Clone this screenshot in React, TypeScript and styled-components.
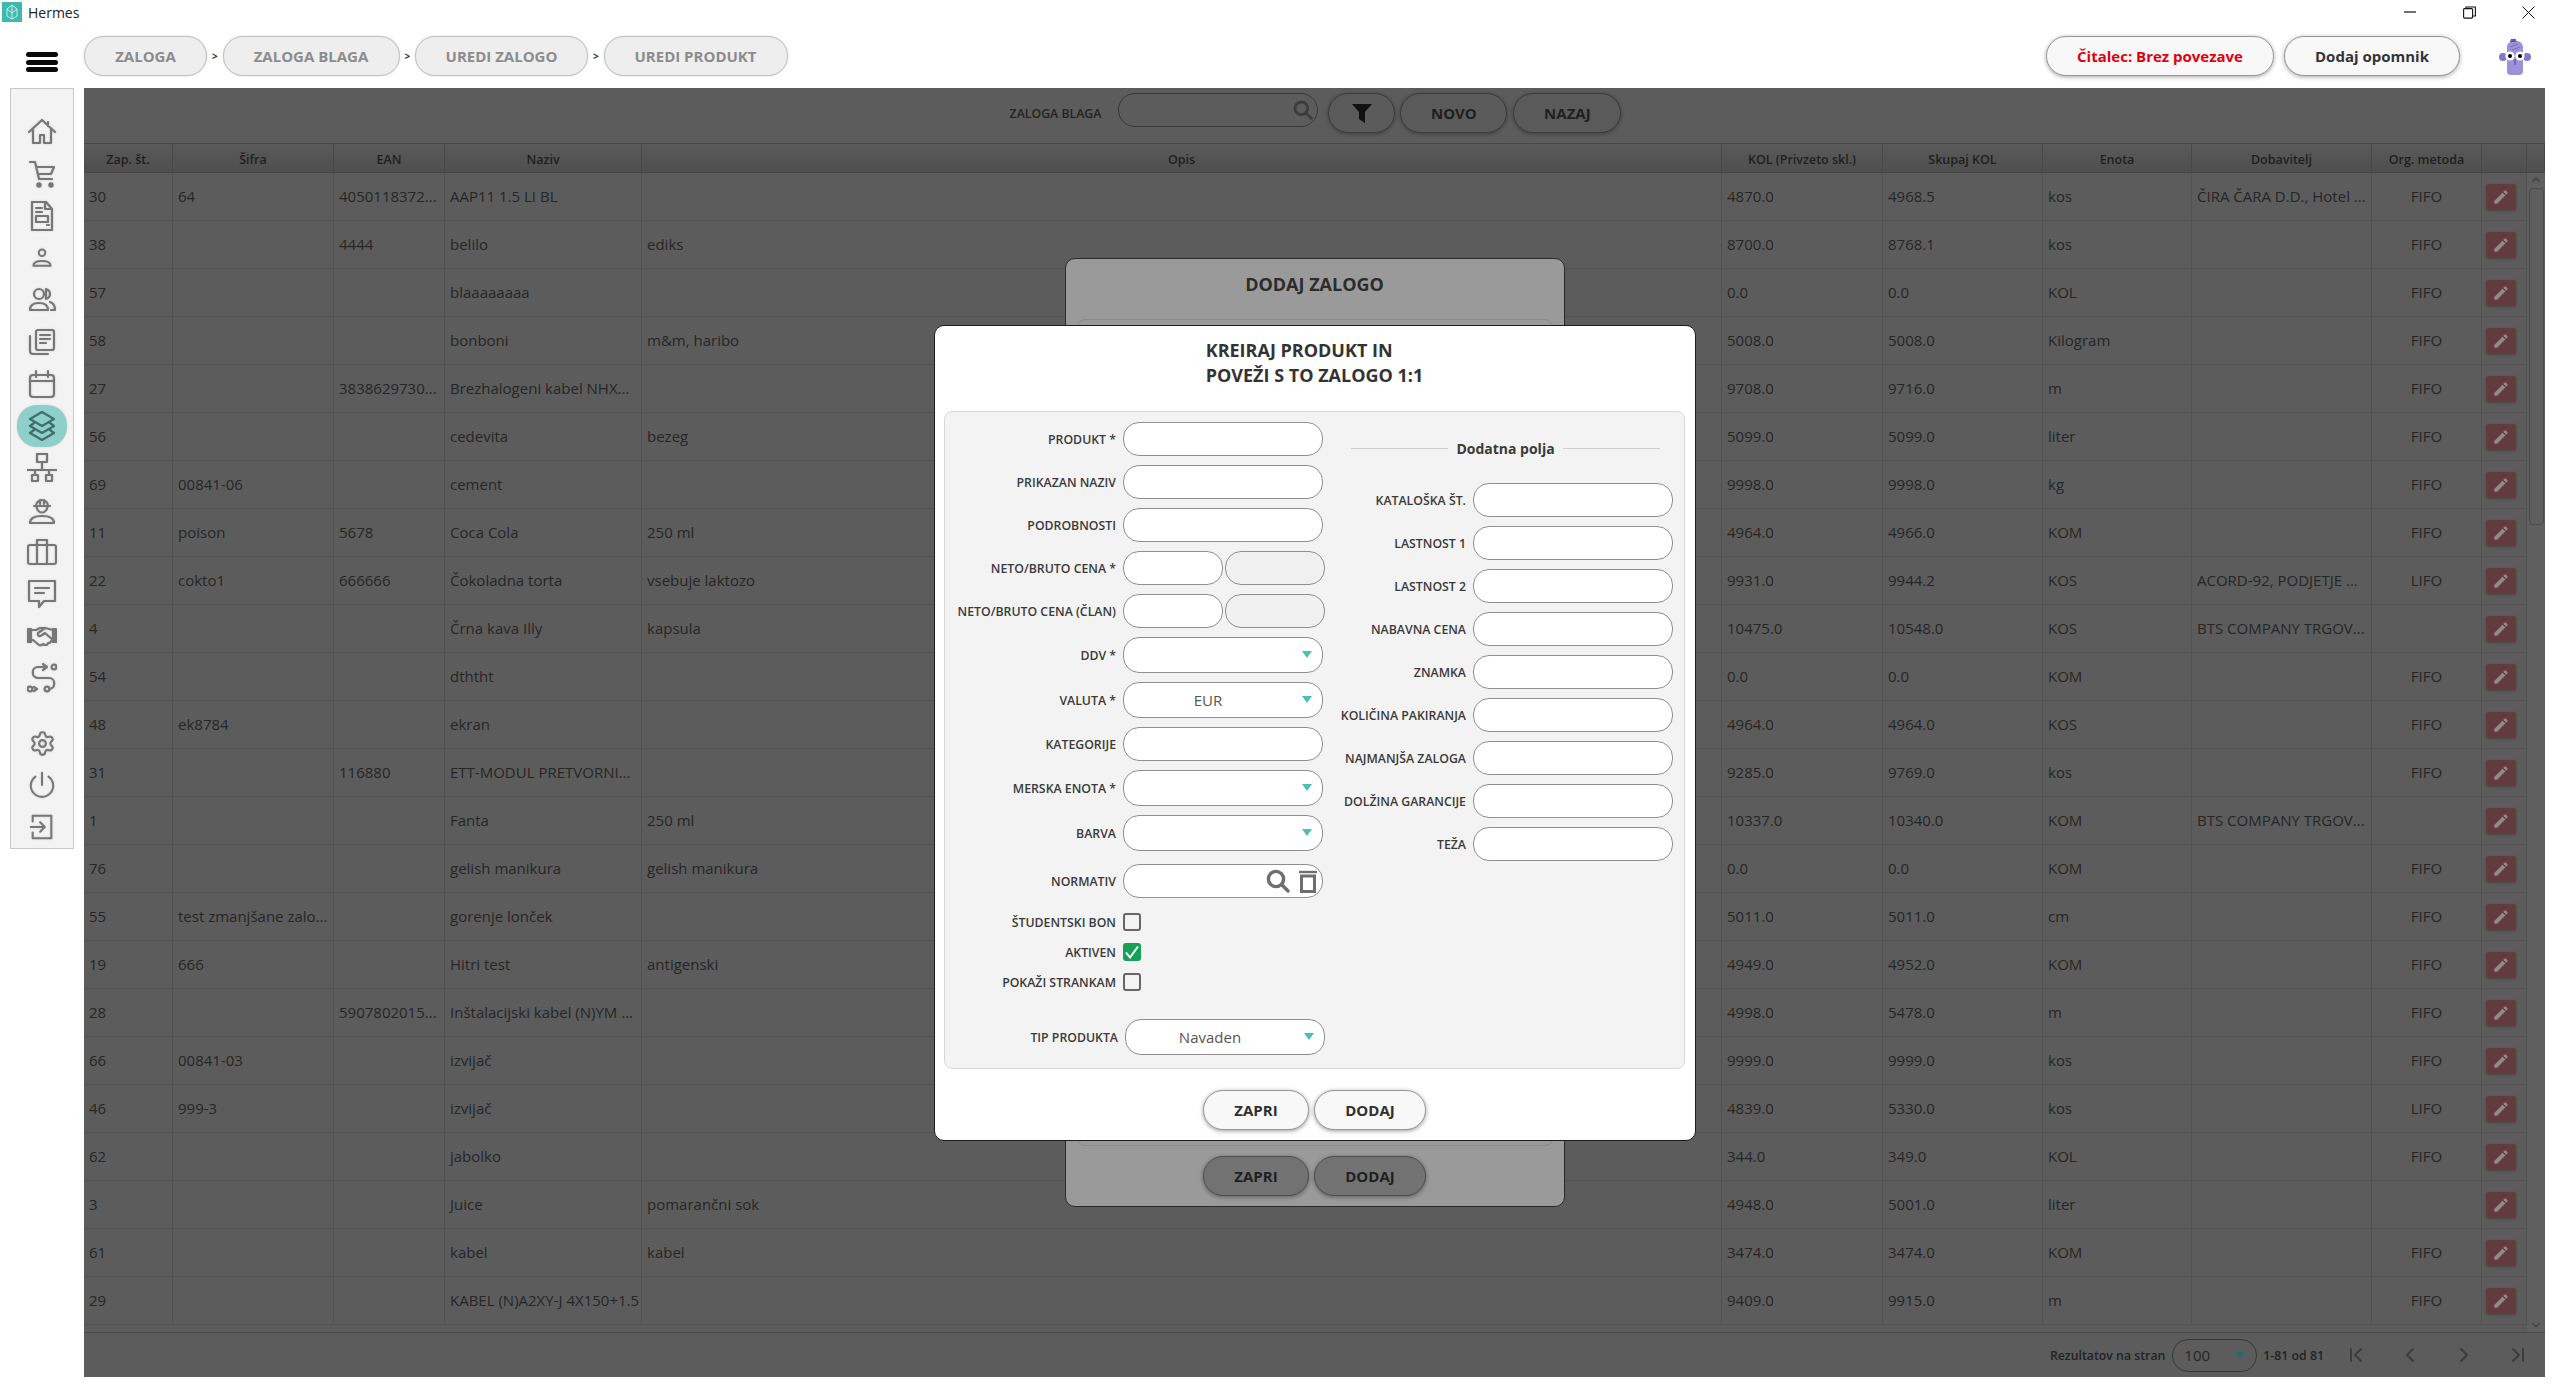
import React from "react"
import styled, { createGlobalStyle } from "styled-components"
import { ChevronFirst, ChevronLast, ChevronLeft, ChevronRight, ChevronDown, ChevronUp, Settings } from "lucide-react"

const Global = createGlobalStyle`
  html, body { margin: 0; padding: 0; background: #fff; }
  body { font-family: "Open Sans", "Liberation Sans", sans-serif; overflow: hidden; }
  * { box-sizing: border-box; }
`

const Page = styled.div`
  width: 2560px;
  height: 1396px;
  display: flex;
  flex-direction: column;
  background: #fff;
`

const TitleBar = styled.div`
  height: 30px;
  display: flex;
  align-items: flex-start;
  padding-left: 2px;
  padding-top: 2px;
  font-size: 14px;
  line-height: 22px;
  color: #222;
`
const TitleText = styled.span`
  margin-left: 6px;
`
const WindowButtons = styled.div`
  margin-left: auto;
  display: flex;
  margin-right: 25px;
  gap: 46px;
  padding-top: 4px;
`
const Header = styled.div`
  height: 58px;
  padding: 6px 28px 0 26px;
  display: flex;
  align-items: flex-start;
`
const Hamburger = styled.div`
  width: 32px;
  height: 20px;
  margin-top: 16px;
  margin-right: 26px;
  display: flex;
  flex-direction: column;
  justify-content: space-between;
  span { display: block; height: 5px; border-radius: 3px; background: #0a0a0a; }
`
const Crumbs = styled.div`
  display: flex;
  align-items: center;
  height: 40px;
`
const Crumb = styled.div<{ $w: number }>`
  width: ${(p) => p.$w}px;
  height: 40px;
  border-radius: 20px;
  border: 1.5px solid #c2c2c2;
  background: #eeeeee;
  box-shadow: 0 0 2px rgba(0, 0, 0, 0.2);
  display: flex;
  align-items: center;
  justify-content: center;
  font-size: 15px;
  font-weight: 700;
  color: #8c8c8c;
`
const CrumbArrow = styled.span`
  width: 15.5px;
  text-align: center;
  font-size: 10px;
  font-weight: 700;
  color: #333;
`
const HeaderRight = styled.div`
  margin-left: auto;
  display: flex;
  align-items: flex-start;
  gap: 10px;
`
const TopButton = styled.div<{ $w: number; $red?: boolean }>`
  width: ${(p) => p.$w}px;
  height: 40px;
  border-radius: 20px;
  border: 1.5px solid #999;
  background: #f8f8f8;
  box-shadow: 0 1px 4px rgba(0, 0, 0, 0.35);
  display: flex;
  align-items: center;
  justify-content: center;
  font-size: 15px;
  font-weight: 700;
  color: ${(p) => (p.$red ? "#e2000f" : "#33343a")};
`
const Avatar = styled.div`
  margin-left: 28px;
  margin-top: 1px;
  width: 34px;
  height: 40px;
`
const Body = styled.div`
  flex: 1;
  display: flex;
  padding: 0 15px 19px 10px;
`
const Sidebar = styled.div`
  width: 64px;
  height: 761px;
  margin-right: 10px;
  padding-top: 22px;
  background: #f3f3f3;
  border: 1px solid #c9c9c9;
  display: flex;
  flex-direction: column;
  align-items: center;
`
const NavItem = styled.div<{ $active?: boolean; $gapTop?: boolean }>`
  width: 50px;
  height: 42px;
  flex: none;
  display: flex;
  align-items: center;
  justify-content: center;
  margin-top: ${(p) => (p.$gapTop ? "23px" : "0")};
  border-radius: 20px;
  background: ${(p) => (p.$active ? "#8fcfca" : "transparent")};
  color: ${(p) => (p.$active ? "#3f6f6c" : "#777")};
  filter: drop-shadow(0 0 1px rgba(0, 0, 0, 0.12));
`
const Glyph = styled.svg.attrs({ viewBox: "0 0 30 30", fill: "none" })<{ $s?: number }>`
  width: ${(p) => p.$s || 30}px;
  height: ${(p) => p.$s || 30}px;
  stroke: currentColor;
  stroke-width: 2.2;
  stroke-linejoin: round;
  stroke-linecap: round;
`
const Main = styled.div`
  flex: 1;
  position: relative;
  display: flex;
  flex-direction: column;
  background: #5c5c5c;
  overflow: hidden;
`
const Toolbar = styled.div`
  height: 55px;
  padding: 5px 0 0 2px;
  display: flex;
  justify-content: center;
  align-items: flex-start;
  color: #232323;
`
const ToolbarLabel = styled.div`
  height: 42px;
  line-height: 42px;
  margin-right: 17px;
  font-size: 12.3px;
  font-weight: 600;
`
const SearchBox = styled.div`
  width: 200px;
  height: 34px;
  border: 1.5px solid #383838;
  border-radius: 17px;
  display: flex;
  align-items: center;
  justify-content: flex-end;
  padding-right: 4px;
  color: #3c3c3c;
  margin-right: 10px;
`
const DimButton = styled.div<{ $w: number; $mr?: number }>`
  width: ${(p) => p.$w}px;
  height: 40px;
  margin-right: ${(p) => p.$mr || 0}px;
  border-radius: 20px;
  border: 1.5px solid #3a3a3a;
  background: #5a5a5a;
  box-shadow: 0 1px 4px rgba(0, 0, 0, 0.3);
  display: flex;
  align-items: center;
  justify-content: center;
  font-size: 15px;
  font-weight: 700;
  color: #1f1f1f;
`
const cols = "89px 161px 111px 197px 1080px 161px 160px 149px 180px 110px 45px"
const HeadRow = styled.div`
  height: 30px;
  flex: none;
  display: grid;
  grid-template-columns: ${cols} 18px;
  border-top: 1px solid #474747;
  border-bottom: 1px solid #474747;
  background: linear-gradient(#5a5a5a, #4e4e4e);
`
const HeadCell = styled.div`
  display: flex;
  align-items: center;
  justify-content: center;
  padding-top: 2px;
  border-right: 1px solid #484848;
  font-size: 12.5px;
  font-weight: 600;
  color: #1f1f1f;
  white-space: nowrap;
`
const TableArea = styled.div`
  flex: 1;
  display: flex;
  min-height: 0;
  border-bottom: 1px solid #484848;
`
const Rows = styled.div`
  width: 2443px;
  overflow: hidden;
`
const Row = styled.div`
  height: 48px;
  display: grid;
  grid-template-columns: ${cols};
  border-bottom: 1px solid #525252;
`
const Cell = styled.div<{ $center?: boolean }>`
  display: flex;
  align-items: center;
  justify-content: ${(p) => (p.$center ? "center" : "flex-start")};
  padding-left: ${(p) => (p.$center ? "0" : "5px")};
  padding-bottom: 2px;
  border-right: 1px solid #525252;
  font-size: 15px;
  color: #262626;
  white-space: nowrap;
  overflow: hidden;
`
const EditButton = styled.div`
  width: 30px;
  height: 26px;
  margin: 2px 0 0 -1px;
  border-radius: 3px;
  background: #623c3c;
  box-shadow: 0 1px 3px rgba(0, 0, 0, 0.25);
  display: flex;
  align-items: center;
  justify-content: center;
`
const Scrollbar = styled.div`
  width: 18px;
  display: flex;
  flex-direction: column;
  align-items: center;
  color: #3f3f3f;
  background: #5f5f5f;
`
const ScrollThumb = styled.div`
  width: 15px;
  height: 337px;
  margin: 1px 0 auto;
  border: 1px solid #4a4a4a;
  border-radius: 4px;
  background: #5e5e5e;
`
const Footer = styled.div`
  height: 44px;
  flex: none;
  display: flex;
  align-items: center;
  justify-content: flex-end;
  font-size: 12.3px;
  font-weight: 600;
  color: #232323;
`
const PageSize = styled.div`
  width: 85px;
  height: 33px;
  margin: 0 6px 0 7px;
  padding: 0 11px;
  border: 1.5px solid #383838;
  border-radius: 16px;
  display: flex;
  align-items: center;
  justify-content: space-between;
  font-size: 15px;
  font-weight: 400;
  color: #262626;
`
const DarkCaret = styled.i`
  width: 0;
  height: 0;
  border-left: 5px solid transparent;
  border-right: 5px solid transparent;
  border-top: 7px solid #2a6864;
`
const Pager = styled.div`
  display: flex;
  margin-left: 20px;
  margin-right: 15px;
  gap: 30px;
  color: #3c3c3c;
`
const Overlay = styled.div`
  position: absolute;
  inset: 0;
  display: flex;
  align-items: center;
  justify-content: center;
`
const BackModal = styled.div`
  width: 500px;
  height: 949px;
  border: 1px solid #2a2a2a;
  border-radius: 10px;
  background: #9a9a9a;
  display: flex;
  flex-direction: column;
  align-items: center;
  padding: 10px 11px 10px;
`
const BackTitle = styled.div`
  font-size: 18px;
  font-weight: 700;
  line-height: 30px;
  color: #2c2c2c;
`
const BackPanel = styled.div`
  width: 100%;
  flex: 1;
  margin: 20px 0 10px;
  border: 1px solid #8a8a8a;
  border-radius: 8px;
`
const BackActions = styled.div`
  display: flex;
  gap: 5px;
`
const Modal = styled.div`
  width: 762px;
  height: 816px;
  margin-top: 1px;
  border: 1px solid #1c1c1c;
  border-radius: 10px;
  background: #fff;
  display: flex;
  flex-direction: column;
  align-items: center;
  padding: 12px 10px 0;
`
const ModalTitle = styled.div`
  font-size: 18px;
  font-weight: 700;
  line-height: 25px;
  color: #333;
  margin-bottom: 23px;
`
const Panel = styled.div`
  width: 741px;
  height: 658px;
  flex: none;
  border: 1px solid #d8d8d8;
  border-radius: 8px;
  background: #f3f3f3;
  display: flex;
  padding: 10px 0 0 0;
`
const LeftCol = styled.div`
  width: 380px;
  flex: none;
  display: flex;
  flex-direction: column;
  gap: 9px;
`
const RightCol = styled.div`
  flex: 1;
  min-width: 0;
  display: flex;
  flex-direction: column;
  gap: 9px;
`
const Field = styled.div`
  display: flex;
  align-items: center;
  justify-content: flex-end;
  gap: 7px;
  padding-right: 2px;
`
const ExtraField = styled(Field)`
  padding-right: 11px;
`
const NormativField = styled(Field)`
  margin-top: 4px;
`
const TypeField = styled(Field)`
  margin-top: 19px;
  padding-right: 0;
`
const FieldLabel = styled.label`
  font-size: 12.3px;
  font-weight: 600;
  color: #3a3a3a;
  white-space: nowrap;
  text-align: right;
`
const Input = styled.div<{ $w?: number; $off?: boolean; $h?: number }>`
  width: ${(p) => p.$w || 200}px;
  height: ${(p) => p.$h || 34}px;
  flex: none;
  border: 1.5px solid #8f8f8f;
  border-radius: 16px;
  background: ${(p) => (p.$off ? "#f0f0f0" : "#fff")};
`
const Pair = styled.div`
  display: flex;
  gap: 2px;
  margin-right: -2px;
`
const Select = styled(Input).attrs({ $h: 36 })`
  display: flex;
  align-items: center;
  justify-content: center;
  position: relative;
  padding-right: 30px;
  font-size: 15px;
  color: #555;
`
const Caret = styled.i`
  position: absolute;
  right: 10px;
  top: 13px;
  width: 0;
  height: 0;
  border-left: 5px solid transparent;
  border-right: 5px solid transparent;
  border-top: 7px solid #4dbdb5;
`
const LookupBox = styled(Input)`
  display: flex;
  align-items: center;
  justify-content: flex-end;
  gap: 9px;
  padding-right: 5px;
  color: #6e6e6e;
`
const CheckField = styled(Field)`
  justify-content: flex-start;
  padding-right: 0;
`
const CheckLabel = styled(FieldLabel)`
  width: 170px;
`
const Check = styled.div<{ $on?: boolean }>`
  width: 18px;
  height: 18px;
  border-radius: 3px;
  border: ${(p) => (p.$on ? "none" : "2px solid #666")};
  background: ${(p) => (p.$on ? "#17a05a" : "transparent")};
  display: flex;
  align-items: center;
  justify-content: center;
`
const ChecksGroup = styled.div`
  margin-top: 6px;
  padding-left: 1px;
  display: flex;
  flex-direction: column;
  gap: 12px;
`
const ExtraTitle = styled.div`
  height: 34px;
  margin: 9px 24px 9px 26px;
  display: flex;
  align-items: center;
  gap: 8px;
  font-size: 14px;
  font-weight: 700;
  color: #3a3a3a;
  white-space: nowrap;
  &::before, &::after { content: ""; flex: 1; height: 1px; background: #cfcfcf; }
`
const Actions = styled.div`
  margin-top: 21px;
  display: flex;
  gap: 5px;
`
const ModalButton = styled.div<{ $w: number; $dim?: boolean }>`
  width: ${(p) => p.$w}px;
  height: 40px;
  border-radius: 20px;
  border: 1.5px solid ${(p) => (p.$dim ? "#4f4f4f" : "#999")};
  background: ${(p) => (p.$dim ? "#727272" : "#f8f8f8")};
  box-shadow: 0 1px 4px rgba(0, 0, 0, 0.4);
  display: flex;
  align-items: center;
  justify-content: center;
  font-size: 15px;
  font-weight: 700;
  color: ${(p) => (p.$dim ? "#1f1f1f" : "#2f2f2f")};
`

const Magnifier = ({ size }: { size: number }) => (
  <svg width={size} height={size} viewBox="0 0 24 24" fill="none" stroke="currentColor" strokeWidth="3.4" strokeLinecap="round">
    <circle cx="10" cy="10" r="7.6" />
    <path d="M16 16l6 6" />
  </svg>
)

const navIcons = [
  <Glyph><path d="M2 15L15 3l13 12M21 5v4M6 12v14h7v-8h4v8h7V12" /></Glyph>,
  <Glyph><path d="M3 3h5l4 17h13M9 8h18l-3 7H11" /><circle cx="12" cy="26" r="1.6" fill="currentColor" /><circle cx="24" cy="26" r="1.6" fill="currentColor" /></Glyph>,
  <Glyph><path d="M5 1h14l6 7v21H5zM18 1v7h7M9 7h6M9 11h6M20 24h2" /><rect x="9" y="15" width="12" height="6" /></Glyph>,
  <Glyph $s={26}><circle cx="15" cy="9" r="3.8" /><path d="M5 24c0-4 4-5.5 10-5.5s10 1.5 10 5.5z" /></Glyph>,
  <Glyph><circle cx="12" cy="9" r="5" /><path d="M3 25c0-5 4-7 9-7s9 2 9 7zM19 4c3 1 4 3 4 5s-1 4-4 5zM23 17c3 1 5 4 5 8h-4" /></Glyph>,
  <Glyph><rect x="9" y="3" width="18" height="20" rx="2" /><path d="M13 8h10M13 12h10M13 16h6M3 9v15a3 3 0 0 0 3 3h15" /></Glyph>,
  <Glyph><rect x="3" y="6" width="24" height="22" rx="3" /><path d="M3 12h24M9 2v6M21 2v6" /></Glyph>,
  <Glyph><path d="M15 1L27 8 15 15 3 8zM7 12L3 15l12 7 12-7-4-3M7 19l-4 3 12 7 12-7-4-3" /></Glyph>,
  <Glyph><rect x="10" y="1" width="10" height="8" /><path d="M15 9v8M0 17h30M8 17v5M22 17v5" /><rect x="5" y="22" width="6" height="6" /><rect x="19" y="22" width="6" height="6" /></Glyph>,
  <Glyph><path d="M9 11a6 6 0 0 1 12 0M7 11h16M9.5 11a5.5 6.5 0 0 0 11 0M13 5v4M17 5v4M3 28c0-5 4-7 12-7s12 2 12 7z" /></Glyph>,
  <Glyph><rect x="1" y="8" width="28" height="19" rx="2" /><path d="M10 8V3h10v5M10 8v19M20 8v19" /></Glyph>,
  <Glyph><path d="M2 2h26v20H17l-5 6v-6H2zM8 9h14M8 14h9" /></Glyph>,
  <Glyph>
    <path d="M1 8h3v13H1zM26 8h3v13h-3z" fill="currentColor" />
    <path d="M4 9h5l4-2h5l8 2M18 7l-7 5c-1 3 2 4 4 2l3-2 8 7M4 19h2l6 5c2 1 3 0 4-1l2 1c2 0 3-1 3-2 2 0 3-1 3-2" />
  </Glyph>,
  <Glyph><circle cx="27" cy="4" r="2.4" /><path d="M20 4H11c-7 0-7 11 0 11h11c7 0 7 11 0 11M16 1l4 3-4 3M7 24l3 2-3 2" /><circle cx="3" cy="26" r="2.4" /><circle cx="20" cy="26" r="2.4" /></Glyph>,
  <Settings size={27} strokeWidth={1.9} />,
  <Glyph $s={28}><path d="M15 2v13M8 6a12 12 0 1 0 14 0" /></Glyph>,
  <Glyph $s={28}><path d="M5 9V3h20v24H5v-6M3 15h15M13 10l5 5-5 5" /></Glyph>,
]

const leftFields = ["PRODUKT *", "PRIKAZAN NAZIV", "PODROBNOSTI"]
const extraFields = [
  "KATALOŠKA ŠT.", "LASTNOST 1", "LASTNOST 2", "NABAVNA CENA", "ZNAMKA",
  "KOLIČINA PAKIRANJA", "NAJMANJŠA ZALOGA", "DOLŽINA GARANCIJE", "TEŽA",
]
const headers = ["Zap. št.", "Šifra", "EAN", "Naziv", "Opis", "KOL (Privzeto skl.)", "Skupaj KOL", "Enota", "Dobavitelj", "Org. metoda", "", ""]

const data = [
  ["30", "64", "4050118372...", "AAP11 1.5 LI BL", "", "4870.0", "4968.5", "kos", "ČIRA ČARA D.D., Hotel ...", "FIFO"],
  ["38", "", "4444", "belilo", "ediks", "8700.0", "8768.1", "kos", "", "FIFO"],
  ["57", "", "", "blaaaaaaaa", "", "0.0", "0.0", "KOL", "", "FIFO"],
  ["58", "", "", "bonboni", "m&m, haribo", "5008.0", "5008.0", "Kilogram", "", "FIFO"],
  ["27", "", "3838629730...", "Brezhalogeni kabel NHX...", "", "9708.0", "9716.0", "m", "", "FIFO"],
  ["56", "", "", "cedevita", "bezeg", "5099.0", "5099.0", "liter", "", "FIFO"],
  ["69", "00841-06", "", "cement", "", "9998.0", "9998.0", "kg", "", "FIFO"],
  ["11", "poison", "5678", "Coca Cola", "250 ml", "4964.0", "4966.0", "KOM", "", "FIFO"],
  ["22", "cokto1", "666666", "Čokoladna torta", "vsebuje laktozo", "9931.0", "9944.2", "KOS", "ACORD-92, PODJETJE ...", "LIFO"],
  ["4", "", "", "Črna kava Illy", "kapsula", "10475.0", "10548.0", "KOS", "BTS COMPANY TRGOV...", ""],
  ["54", "", "", "dththt", "", "0.0", "0.0", "KOM", "", "FIFO"],
  ["48", "ek8784", "", "ekran", "", "4964.0", "4964.0", "KOS", "", "FIFO"],
  ["31", "", "116880", "ETT-MODUL PRETVORNI...", "", "9285.0", "9769.0", "kos", "", "FIFO"],
  ["1", "", "", "Fanta", "250 ml", "10337.0", "10340.0", "KOM", "BTS COMPANY TRGOV...", ""],
  ["76", "", "", "gelish manikura", "gelish manikura", "0.0", "0.0", "KOM", "", "FIFO"],
  ["55", "test zmanjšane zalo...", "", "gorenje lonček", "", "5011.0", "5011.0", "cm", "", "FIFO"],
  ["19", "666", "", "Hitri test", "antigenski", "4949.0", "4952.0", "KOM", "", "FIFO"],
  ["28", "", "5907802015...", "Inštalacijski kabel (N)YM ...", "", "4998.0", "5478.0", "m", "", "FIFO"],
  ["66", "00841-03", "", "izvijač", "", "9999.0", "9999.0", "kos", "", "FIFO"],
  ["46", "999-3", "", "izvijač", "", "4839.0", "5330.0", "kos", "", "LIFO"],
  ["62", "", "", "jabolko", "", "344.0", "349.0", "KOL", "", "FIFO"],
  ["3", "", "", "Juice", "pomarančni sok", "4948.0", "5001.0", "liter", "", ""],
  ["61", "", "", "kabel", "kabel", "3474.0", "3474.0", "KOM", "", "FIFO"],
  ["29", "", "", "KABEL (N)A2XY-J 4X150+1.5", "", "9409.0", "9915.0", "m", "", "FIFO"],
]

export default function App() {
  return (
    <Page>
      <Global />
      <TitleBar>
        <svg width="20" height="20" viewBox="0 0 20 20">
          <rect width="20" height="20" fill="#3fb8af" />
          <path d="M10 3l5 4v7l-5 3-5-3V7zM10 3v14M5 7l5 4 5-4" fill="none" stroke="#d8f3f0" strokeWidth="0.9" />
        </svg>
        <TitleText>Hermes</TitleText>
        <WindowButtons>
          <svg width="13" height="13" viewBox="0 0 13 13"><path d="M0 6h12" stroke="#111" strokeWidth="1.2" /></svg>
          <svg width="13" height="13" viewBox="0 0 13 13" fill="none" stroke="#111" strokeWidth="1.1"><rect x="0.6" y="2.6" width="9" height="9.5" rx="1" /><path d="M3 2.5V1h9.4v9H10" /></svg>
          <svg width="13" height="13" viewBox="0 0 13 13" fill="none" stroke="#111" strokeWidth="1"><path d="M0.5 0.5l12 12M12.5 0.5l-12 12" /></svg>
        </WindowButtons>
      </TitleBar>
      <Header>
        <Hamburger><span /><span /><span /></Hamburger>
        <Crumbs>
          <Crumb $w={123}>ZALOGA</Crumb>
          <CrumbArrow>&gt;</CrumbArrow>
          <Crumb $w={177}>ZALOGA BLAGA</Crumb>
          <CrumbArrow>&gt;</CrumbArrow>
          <Crumb $w={173}>UREDI ZALOGO</Crumb>
          <CrumbArrow>&gt;</CrumbArrow>
          <Crumb $w={184}>UREDI PRODUKT</Crumb>
        </Crumbs>
        <HeaderRight>
          <TopButton $w={228} $red>Čitalec: Brez povezave</TopButton>
          <TopButton $w={176}>Dodaj opomnik</TopButton>
          <Avatar>
            <svg width="34" height="40" viewBox="0 0 34 40">
              <path d="M9 10c0-4 4-6 6-6l2-3 2 3c2 0 6 2 6 6v25c0 2-2 3-4 3h-8c-2 0-4-1-4-3z" fill="#9d92da" />
              <path d="M13 2h4l1 3h-6z" fill="#5f54a8" />
              <circle cx="5" cy="20" r="4" fill="#8378c8" />
              <circle cx="29" cy="20" r="4" fill="#8378c8" />
              <circle cx="12" cy="19" r="4.6" fill="#fff" />
              <circle cx="22" cy="19" r="4.6" fill="#fff" />
              <circle cx="12" cy="19" r="2" fill="#000" />
              <circle cx="22" cy="19" r="2" fill="#000" />
              <path d="M17 22v6" stroke="#4a4080" strokeWidth="1" />
              <path d="M12 10l8-3M14 13l8-3" stroke="#7a6fc0" strokeWidth="1" />
            </svg>
          </Avatar>
        </HeaderRight>
      </Header>
      <Body>
        <Sidebar>
          {navIcons.map((icon, i) => (
            <NavItem key={i} $active={i === 7} $gapTop={i === 14}>{icon}</NavItem>
          ))}
        </Sidebar>
        <Main>
          <Toolbar>
            <ToolbarLabel>ZALOGA BLAGA</ToolbarLabel>
            <SearchBox><Magnifier size={20} /></SearchBox>
            <DimButton $w={67} $mr={5}>
              <svg width="20" height="19" viewBox="0 0 20 19"><path d="M0 0h20l-7 8v11l-6-4V8z" fill="#111" /></svg>
            </DimButton>
            <DimButton $w={107} $mr={6}>NOVO</DimButton>
            <DimButton $w={108}>NAZAJ</DimButton>
          </Toolbar>
          <HeadRow>
            {headers.map((h, i) => <HeadCell key={i}>{h}</HeadCell>)}
          </HeadRow>
          <TableArea>
            <Rows>
              {data.map((r) => (
                <Row key={r[0]}>
                  {r.map((v, i) => <Cell key={i} $center={i === 9}>{v}</Cell>)}
                  <Cell>
                    <EditButton>
                      <svg width="18" height="18" viewBox="0 0 24 24" fill="#978888">
                        <path d="M3 17.25V21h3.75L17.81 9.94l-3.75-3.75L3 17.25zM20.71 7.04a1 1 0 0 0 0-1.41l-2.34-2.34a1 1 0 0 0-1.41 0l-1.83 1.83 3.75 3.75 1.83-1.83z" />
                      </svg>
                    </EditButton>
                  </Cell>
                </Row>
              ))}
            </Rows>
            <Scrollbar>
              <ChevronUp size={14} />
              <ScrollThumb />
              <ChevronDown size={14} />
            </Scrollbar>
          </TableArea>
          <Footer>
            Rezultatov na stran
            <PageSize>100<DarkCaret /></PageSize>
            1-81 od 81
            <Pager>
              <ChevronFirst size={24} strokeWidth={2} />
              <ChevronLeft size={24} strokeWidth={2} />
              <ChevronRight size={24} strokeWidth={2} />
              <ChevronLast size={24} strokeWidth={2} />
            </Pager>
          </Footer>
          <Overlay>
            <BackModal>
              <BackTitle>DODAJ ZALOGO</BackTitle>
              <BackPanel />
              <BackActions>
                <ModalButton $w={106} $dim>ZAPRI</ModalButton>
                <ModalButton $w={112} $dim>DODAJ</ModalButton>
              </BackActions>
            </BackModal>
          </Overlay>
          <Overlay>
            <Modal>
              <ModalTitle>KREIRAJ PRODUKT IN<br />POVEŽI S TO ZALOGO 1:1</ModalTitle>
              <Panel>
                <LeftCol>
                  {leftFields.map((f) => (
                    <Field key={f}><FieldLabel>{f}</FieldLabel><Input /></Field>
                  ))}
                  <Field><FieldLabel>NETO/BRUTO CENA *</FieldLabel><Pair><Input $w={100} /><Input $w={100} $off /></Pair></Field>
                  <Field><FieldLabel>NETO/BRUTO CENA (ČLAN)</FieldLabel><Pair><Input $w={100} /><Input $w={100} $off /></Pair></Field>
                  <Field><FieldLabel>DDV *</FieldLabel><Select><Caret /></Select></Field>
                  <Field><FieldLabel>VALUTA *</FieldLabel><Select>EUR<Caret /></Select></Field>
                  <Field><FieldLabel>KATEGORIJE</FieldLabel><Input /></Field>
                  <Field><FieldLabel>MERSKA ENOTA *</FieldLabel><Select><Caret /></Select></Field>
                  <Field><FieldLabel>BARVA</FieldLabel><Select><Caret /></Select></Field>
                  <NormativField>
                    <FieldLabel>NORMATIV</FieldLabel>
                    <LookupBox>
                      <Magnifier size={24} />
                      <svg width="18" height="23" viewBox="0 0 18 23" fill="none" stroke="currentColor" strokeWidth="3">
                        <path d="M0 2h18" strokeWidth="2.4" />
                        <rect x="2.5" y="6" width="13" height="15.5" />
                      </svg>
                    </LookupBox>
                  </NormativField>
                  <ChecksGroup>
                    <CheckField><CheckLabel>ŠTUDENTSKI BON</CheckLabel><Check /></CheckField>
                    <CheckField>
                      <CheckLabel>AKTIVEN</CheckLabel>
                      <Check $on>
                        <svg width="14" height="14" viewBox="0 0 14 14" fill="none" stroke="#fff" strokeWidth="2"><path d="M1 7.5l4 5L13 1.5" /></svg>
                      </Check>
                    </CheckField>
                    <CheckField><CheckLabel>POKAŽI STRANKAM</CheckLabel><Check /></CheckField>
                  </ChecksGroup>
                  <TypeField>
                    <FieldLabel>TIP PRODUKTA</FieldLabel><Select>Navaden<Caret /></Select>
                  </TypeField>
                </LeftCol>
                <RightCol>
                  <ExtraTitle>Dodatna polja</ExtraTitle>
                  {extraFields.map((f) => (
                    <ExtraField key={f}><FieldLabel>{f}</FieldLabel><Input /></ExtraField>
                  ))}
                </RightCol>
              </Panel>
              <Actions>
                <ModalButton $w={106}>ZAPRI</ModalButton>
                <ModalButton $w={112}>DODAJ</ModalButton>
              </Actions>
            </Modal>
          </Overlay>
        </Main>
      </Body>
    </Page>
  )
}
